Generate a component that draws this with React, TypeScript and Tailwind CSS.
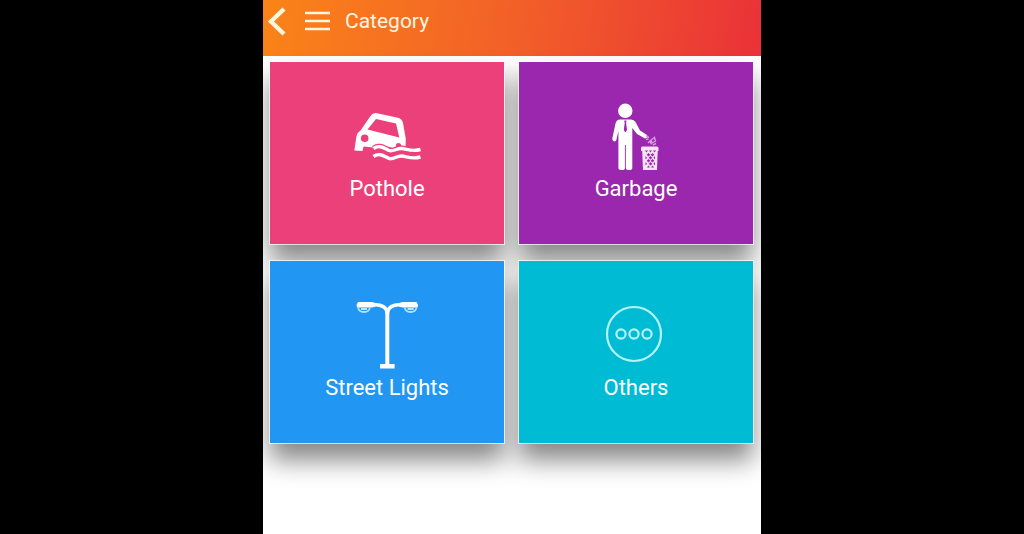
interface Category {
  id:    string;
  label: string;
  color: string;
  icon:  React.ReactNode;
}

const iconClass = 'size-[68px] shrink-0';

function PotholeIcon() {
  return (
    <svg viewBox="0 0 68 68" className={iconClass} fill="none" aria-hidden="true">
      <path
        fill="#fff"
        fillRule="evenodd"
        d="M1.3 48.5 3.5 34Q4.3 30.5 7.5 28.5L17.5 14Q19.8 10.500 24 11.2L45 15.800Q49 16.800 50 21L52.800 37 52.500 45 46 43 40 46 33 44 27 42 20.5 45.5 10.5 44.5 9.5 49ZM14.500 27.500 46.300 35.500 43 21.500 23 17ZM11.7 32.4a3.8 3.8 0 1 0 0 7.6 3.8 3.8 0 0 0 0-7.6Z"
      />
      <circle cx="45.5" cy="43.5" r="2.6" fill="#ec407a" />
      <path stroke="#ec407a" strokeWidth="5" d="M20.5 46C27 41.500 32 46.500 36 48S44 45.500 49 46 59 49.500 67.500 47" />
      <path stroke="#fff" strokeWidth="3.400" d="M20.5 46.5C27 42 32 47 36 48.5S44 46 49 46.5 59 50 67.5 47.5" />
      <path stroke="#fff" strokeWidth="3.400" d="M20.5 54.5C27 50 32 55 36 56.5S44 53.5 49 54 59 57.5 67.5 55" />
    </svg>
  );
}

function GarbageIcon() {
  return (
    <svg viewBox="0 0 68 68" className={iconClass} fill="none" aria-hidden="true">
      <circle cx="23.3" cy="8.8" r="7.2" fill="#fff" />
      <path
        fill="#fff"
        d="M18 17.5H29Q32 17.5 33.5 20L38 28.500 45 33Q46.500 36 43 36.5L35 32 30.300 26V66Q30.300 68 27 68 23.8 68 23.8 66V43H22.9V66Q22.9 68 20 68 16.4 68 16.4 66V29L14.5 37.5Q14 40 11.8 39.3 9.8 38.5 10.4 36L13.5 21.5Q14.5 17.5 18 17.5Z"
      />
      <path fill="#9a27ad" d="M22.3 18.5h2.2l-.4 2.5.9 7-1.6 2.5L21.8 28l.9-7Z" />
      <path
        stroke="#d79be2"
        strokeWidth="1.400"
        d="m44 34 3 1.5M44 37.5l2.5-.5M49 38l3.5-2.5 1 3.5-3.500 2ZM46 41l2-2 1.500 3.500M51 43l3-1.500"
      />
      <path fill="#f8e3fb" d="M39 46Q39 44.500 40.500 44.500H55Q56.500 44.500 56.500 46V49H55.700L55 68H41L40.200 49H39Z" />
      <path
        fill="#9a27ad"
        d="M43 48.500h3l-1.500 2ZM47 48.500h3l-1.500 2ZM51 48.500h3l-1.500 2ZM46.500 51l1.800 1.800-1.800 1.800-1.800-1.800ZM50.500 51l1.800 1.800-1.800 1.800-1.800-1.800ZM43.500 54l1.600 1.800-1.600 1.800ZM48.500 54l1.800 1.800-1.800 1.800-1.800-1.800ZM53 54v3.600l-1.600-1.800ZM46.500 57l1.800 1.800-1.800 1.800-1.800-1.800ZM50.500 57l1.800 1.800-1.800 1.800-1.800-1.800ZM43.500 60l1.600 1.800-1.600 1.800ZM48.500 60l1.800 1.800-1.800 1.800-1.800-1.800ZM53 60v3.600l-1.600-1.800ZM45 65.500l1.500-2 1.500 2ZM49 65.500l1.500-2 1.500 2Z"
      />
    </svg>
  );
}

function StreetLightIcon() {
  return (
    <svg viewBox="0 0 68 68" className={iconClass} fill="none" aria-hidden="true">
      <path fill="#fff" d="M5 1H19L22.5 2V5.5L19 6.5H4L3.5 4ZM63.6 1H49.6L46 2V5.5L49.6 6.5H64.6L65 4Z" />
      <path stroke="#fff" strokeWidth="3.600" d="M21 3.800C28 3.300 34.300 6 34.300 13 34.300 6 40.600 3.300 47.600 3.800" />
      <path stroke="#fff" strokeWidth="4" d="M34.3 10V64" />
      <path fill="#fff" d="M27 63H41.6V67.500H27Z" />
      <path
        stroke="#b9e2fd"
        strokeWidth="1.8"
        d="M5.2 6.5C6 12.5 16 12.5 16.8 6.5M8 8h6M51.8 6.5C52.6 12.5 62.6 12.5 63.4 6.5M54.6 8h6"
      />
    </svg>
  );
}

function OthersIcon() {
  return (
    <svg viewBox="0 0 68 68" className={iconClass} fill="none" stroke="#b5f3fa" strokeWidth="2.2" aria-hidden="true">
      <circle cx="32" cy="33" r="27" />
      <circle cx="19" cy="33" r="4.6" />
      <circle cx="32" cy="33" r="4.6" />
      <circle cx="45" cy="33" r="4.6" />
    </svg>
  );
}

const CATEGORIES: Category[] = [
  { id: 'pothole', label: 'Pothole',       color: 'bg-[#ec407a]', icon: <PotholeIcon /> },
  { id: 'garbage', label: 'Garbage',       color: 'bg-[#9a27ad]', icon: <GarbageIcon /> },
  { id: 'lights',  label: 'Street Lights', color: 'bg-[#2196f3]', icon: <StreetLightIcon /> },
  { id: 'others',  label: 'Others',        color: 'bg-[#00bbd4]', icon: <OthersIcon /> },
];

const cardBase =
  'relative flex flex-col items-center gap-1 pt-10 pb-[41px] text-[22px] leading-7 text-white ring-1 ring-white/70';

// The shadow sits on its own layer so that it never darkens a neighbouring card.
const cardShadow =
  'before:absolute before:inset-0 before:-z-10 before:shadow-[0_17px_24px_rgba(0,0,0,0.48)]';

function Header() {
  return (
    <header className="flex items-center h-14 pl-1 pb-3.5 text-[#fff6e0] bg-linear-[98deg] from-[#fa8418] via-[#f26028] to-[#ea3238]">
      <button type="button" aria-label="Back">
        <svg viewBox="0 0 20 30" className="w-5 h-[30px]" fill="none" stroke="currentColor" strokeWidth="4.4" aria-hidden="true">
          <path d="M17 3 4 15.5 17 28" />
        </svg>
      </button>
      <button type="button" aria-label="Menu" className="ml-[18px]">
        <svg viewBox="0 0 26 20" className="w-[26px] h-5" fill="none" stroke="currentColor" strokeWidth="2.4" aria-hidden="true">
          <path d="M0 2H25M0 10H25M0 18H25" />
        </svg>
      </button>
      <h1 className="ml-3.5 text-[21px] leading-7">Category</h1>
    </header>
  );
}

export default function App() {
  return (
    <div className="min-h-screen bg-black font-[Roboto,sans-serif]">
      <div className="flex flex-col max-w-[498px] min-h-screen mx-auto bg-white overflow-hidden">
        <Header />
        <main className="isolate grid grid-cols-2 gap-x-[15px] gap-y-[17px] pt-1.5 pl-[7px] pr-2 pb-14">
          {CATEGORIES.map((category) => (
            <button key={category.id} type="button" className={`${cardBase} ${cardShadow} ${category.color}`}>
              {category.icon}
              <span className="pt-px">{category.label}</span>
            </button>
          ))}
        </main>
      </div>
    </div>
  );
}
